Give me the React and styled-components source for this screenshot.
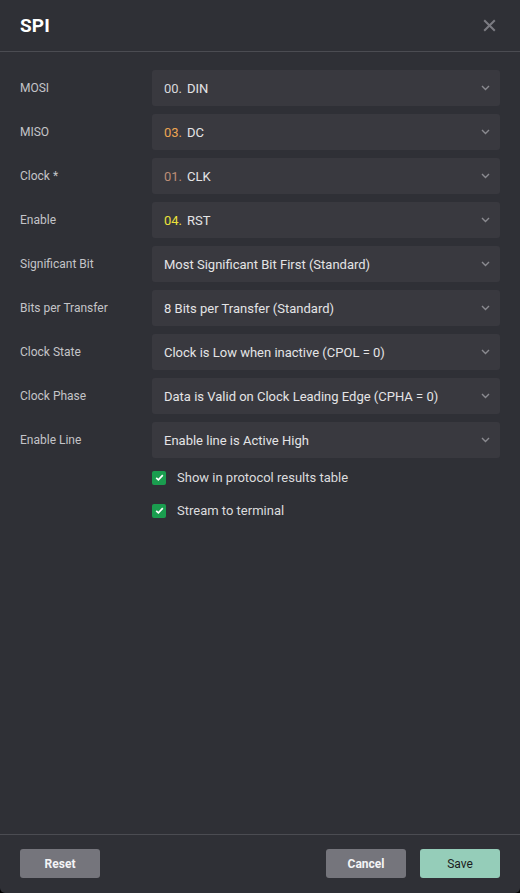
import React from "react"
import styled, { createGlobalStyle } from "styled-components"

const GlobalStyle = createGlobalStyle`
    html, body {
        margin: 0;
        padding: 0;
        background: #000;
    }
    * {
        box-sizing: border-box;
    }
`

const Dialog = styled.div`
    width: 520px;
    height: 893px;
    display: flex;
    flex-direction: column;
    background: #2f3036;
    border-radius: 0 0 5px 5px;
    font-family: Roboto, "Liberation Sans", sans-serif;
    color: #e2e2e4;
    overflow: hidden;
`

const Header = styled.div`
    height: 52px;
    display: flex;
    align-items: center;
    justify-content: space-between;
    padding: 0 24px 0 20px;
    border-bottom: 1px solid #4b4c52;
    flex-shrink: 0;
`

const Title = styled.h1`
    margin: 0;
    font-size: 19px;
    font-weight: 700;
    color: #fff;
    letter-spacing: 0.1px;
`

const CloseButton = styled.button`
    border: 0;
    background: none;
    padding: 0;
    width: 13px;
    height: 13px;
    display: flex;
    cursor: pointer;
`

const Body = styled.div`
    flex: 1;
    padding: 18px 20px 0;
    display: flex;
    flex-direction: column;
    gap: 8px;
`

const Row = styled.div`
    display: grid;
    grid-template-columns: 132px 1fr;
    align-items: center;
`

const Label = styled.span`
    font-size: 12px;
    color: #c4c4c8;
`

const Select = styled.div`
    height: 36px;
    display: flex;
    align-items: center;
    padding: 0 10px 0 12px;
    background: #39393f;
    border-radius: 3px;
    font-size: 13px;
    color: #e4e4e6;
`

const SelectText = styled.span`
    flex: 1;
`

const Num = styled.span`
    color: ${ p => p.color || "#d8d8dc" };
    margin-right: 5px;
`

const Checks = styled.div`
    display: flex;
    flex-direction: column;
    gap: 18px;
    padding: 4px 0 0 132px;
`

const CheckRow = styled.label`
    display: flex;
    align-items: center;
    gap: 11px;
    font-size: 13px;
    color: #dcdcde;
`

const Box = styled.span`
    width: 14px;
    height: 14px;
    border-radius: 2px;
    background: #1a9d4f;
    display: flex;
    align-items: center;
    justify-content: center;
`

const Footer = styled.div`
    height: 59px;
    border-top: 1px solid #4b4c52;
    display: flex;
    align-items: flex-start;
    padding: 14px 20px 0;
    gap: 14px;
    flex-shrink: 0;
`

const Spacer = styled.div`
    flex: 1;
`

const Button = styled.button`
    width: 80px;
    height: 29px;
    border: 0;
    border-radius: 3px;
    font-family: inherit;
    font-size: 12px;
    font-weight: ${ p => p.$primary ? 400 : 700 };
    color: ${ p => p.$primary ? "#1b1c20" : "#f4f4f6" };
    background: ${ p => p.$primary ? "#95cdb9" : "#75757c" };
    cursor: pointer;
`

const Chevron = () => (
    <svg width="9" height="6" viewBox="0 0 9 6">
        <path d="M1 1l3.5 3.5L8 1" fill="none" stroke="#8a8a90" strokeWidth="1.4" />
    </svg>
)

const Check = () => (
    <svg width="9" height="7" viewBox="0 0 9 7">
        <path d="M1.2 3.8l2.2 2L7.8 1.2" fill="none" stroke="#fff" strokeWidth="1.7" />
    </svg>
)

const rows = [
    { label: "MOSI", num: "00.", text: "DIN" },
    { label: "MISO", num: "03.", color: "#eda552", text: "DC" },
    { label: "Clock *", num: "01.", color: "#bd8d76", text: "CLK" },
    { label: "Enable", num: "04.", color: "#ece23a", text: "RST" },
    { label: "Significant Bit", text: "Most Significant Bit First (Standard)" },
    { label: "Bits per Transfer", text: "8 Bits per Transfer (Standard)" },
    { label: "Clock State", text: "Clock is Low when inactive (CPOL = 0)" },
    { label: "Clock Phase", text: "Data is Valid on Clock Leading Edge (CPHA = 0)" },
    { label: "Enable Line", text: "Enable line is Active High" },
]

const App = () => (
    <>
        <GlobalStyle />
        <Dialog>
            <Header>
                <Title>SPI</Title>
                <CloseButton aria-label="Close">
                    <svg width="13" height="13" viewBox="0 0 13 13">
                        <path d="M1.2 1.2l10.6 10.6M11.8 1.2L1.2 11.8" stroke="#7b7b82" strokeWidth="2" />
                    </svg>
                </CloseButton>
            </Header>
            <Body>
                {rows.map(r => (
                    <Row key={r.label}>
                        <Label>{r.label}</Label>
                        <Select>
                            <SelectText>
                                {r.num && <Num color={r.color}>{r.num}</Num>}
                                {r.text}
                            </SelectText>
                            <Chevron />
                        </Select>
                    </Row>
                ))}
                <Checks>
                    <CheckRow><Box><Check /></Box>Show in protocol results table</CheckRow>
                    <CheckRow><Box><Check /></Box>Stream to terminal</CheckRow>
                </Checks>
            </Body>
            <Footer>
                <Button>Reset</Button>
                <Spacer />
                <Button>Cancel</Button>
                <Button $primary>Save</Button>
            </Footer>
        </Dialog>
    </>
)

export default App
